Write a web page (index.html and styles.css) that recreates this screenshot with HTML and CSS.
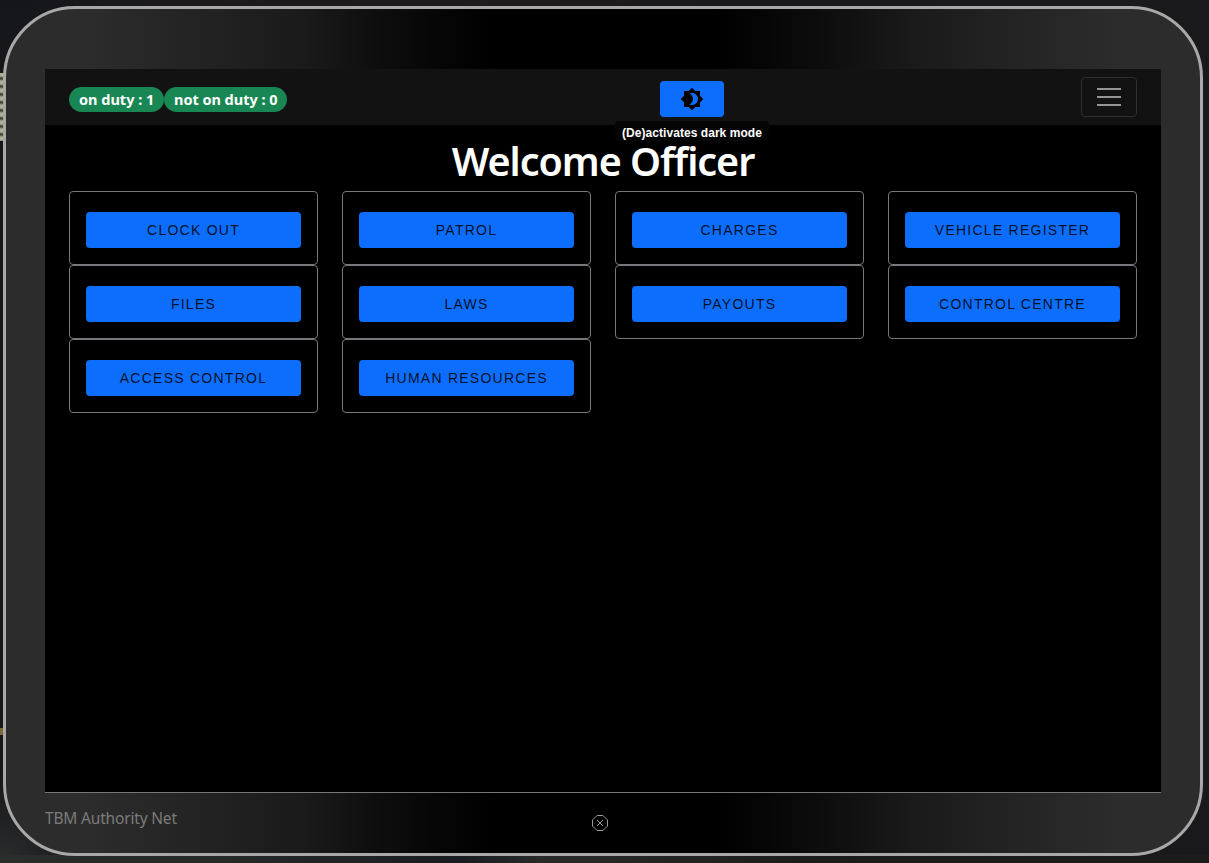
FILE: index.html
```html
<!DOCTYPE html>
<html lang="en">
<head>
<meta charset="utf-8">
<title>TBM Authority Net</title>
<link rel="stylesheet" href="styles.css">
</head>
<body>
<div class="tablet">
  <main class="screen">
    <nav class="navbar">
      <div class="badges"><span class="badge"><span class="duty">on duty : 1</span></span><span class="badge"><span class="off-duty">not on duty : 0</span></span></div>
      <div class="mode">
        <button class="btn mode-btn" aria-label="Dark mode">
          <svg width="24" height="24" viewBox="0 0 24 24"><path d="M20 8.69V4h-4.69L12 .69 8.69 4H4v4.69L.69 12 4 15.31V20h4.69L12 23.31 15.31 20H20v-4.69L23.31 12 20 8.69zM12 18c-.89 0-1.74-.2-2.500-.55C11.56 16.5 13 14.42 13 12s-1.44-4.5-3.5-5.45C10.26 6.200 11.11 6 12 6c3.31 0 6 2.69 6 6s-2.69 6-6 6z"/></svg>
        </button>
        <div class="tooltip"><span class="tooltip-text">(De)activates dark mode</span></div>
      </div>
      <button class="toggler" aria-label="Menu">
        <svg width="30" height="30" viewBox="0 0 30 30"><path d="M3 7h24M3 15h24M3 23h24" stroke="#959595" stroke-width="2"/></svg>
      </button>
    </nav>
    <h1 class="title">Welcome Officer</h1>
    <div class="grid">
      <div class="card"><button class="btn">CLOCK OUT</button></div>
      <div class="card"><button class="btn">PATROL</button></div>
      <div class="card"><button class="btn">CHARGES</button></div>
      <div class="card"><button class="btn">VEHICLE REGISTER</button></div>
      <div class="card"><button class="btn">FILES</button></div>
      <div class="card"><button class="btn">LAWS</button></div>
      <div class="card"><button class="btn">PAYOUTS</button></div>
      <div class="card"><button class="btn">CONTROL CENTRE</button></div>
      <div class="card"><button class="btn">ACCESS CONTROL</button></div>
      <div class="card"><button class="btn">HUMAN RESOURCES</button></div>
    </div>
  </main>
  <footer class="footer">
    <span class="brand">TBM Authority Net</span>
    <svg class="close" width="18" height="18" viewBox="0 0 18 18"><path d="M6 1.500h6L16.500 6v6L12 16.500H6L1.500 12V6zM6 6l6 6M12 6l-6 6" fill="none" stroke="#999"/></svg>
    <span></span>
  </footer>
</div>
</body>
</html>
```
FILE: styles.css
```css
* { box-sizing: border-box; }
body {
  margin: 0;
  height: 863px;
  overflow: hidden;
  padding: 6px 6px 7px 3px;
  font-family: "Noto Sans", "Open Sans", sans-serif;
  background:
    repeating-linear-gradient(#a9b592 0 3px, #3d4638 5px 6px, #a9b592 8px) 0 73px / 4px 68px no-repeat,
    linear-gradient(#7d6a3a, #7d6a3a) 0 728px / 3px 7px no-repeat,
    radial-gradient(circle at 0 100%, #2b2c2c 0, transparent 90px),
    linear-gradient(90deg, #14161a, #1c191b 15%, #1f1c1d 40%, #19181a 60%, #1a191c) 0 0 / 100% 8px no-repeat,
    linear-gradient(90deg, #2a2b2b, #262727 20%, #191c20 38%, #2a2a2a 45%, #1a1a1b 70%, #1c1c1c) 0 855px / 100% 8px no-repeat,
    linear-gradient(90deg, #15171a 0, #1b1c1d 50%, #19181a 100%);
}
.tablet {
  height: 850px;
  padding: 60px 39px 0 39px;
  border: 3px solid #a9a8a9;
  border-radius: 72px;
  background: linear-gradient(90deg, #2c2c2c 0 7%, #212121 18%, #1a1a1a 25%, #0e0e0e 31%, #060606 36%, #000 41% 59%, #060606 64%, #0e0e0e 69%, #1a1a1a 76%, #212121 82%, #2c2c2c 93%);
}
.screen {
  height: 724px;
  background: #000;
  border-bottom: 1px solid #777;
}
.navbar {
  height: 56px;
  display: grid;
  grid-template-columns: 1fr auto 1fr;
  align-items: start;
  padding: 0 24px;
  background: #121212;
}
.badges { display: flex; padding-top: 18px; }
.badge {
  height: 25px;
  padding: 0 10px;
  border-radius: 13px;
  background: #198754;
  color: #fff;
  font-size: 14.500px;
  font-weight: 700;
  line-height: 25px;
  white-space: nowrap;
}
.duty { display: block; width: 75px; }
.off-duty { display: block; width: 103px; letter-spacing: -.03px; }
.btn {
  display: block;
  width: 100%;
  height: 36px;
  padding: 0;
  border: 0;
  border-radius: 4px;
  background: #0d6efd;
  color: rgba(0, 0, 0, .87);
  font: 14px/36px "Liberation Sans", Arial, sans-serif;
  letter-spacing: 1.25px;
}
.mode {
  width: 154px;
  padding-top: 12px;
  transform: translateX(89px);
}
.mode-btn {
  width: 64px;
  margin: 0 auto;
  display: flex;
  align-items: center;
  justify-content: center;
}
.tooltip {
  margin-top: 4px;
  padding-top: 5px;
  height: 20px;
  border-radius: 4px;
  background: #050505;
  color: #fff;
  text-align: center;
  font: 700 12px/14px "Liberation Sans", Arial, sans-serif;
  letter-spacing: .05px;
}
.toggler {
  justify-self: end;
  width: 56px;
  height: 40px;
  margin-top: 8px;
  padding: 4px 12px;
  border: 1px solid #2e2e2e;
  border-radius: 4px;
  background: none;
}
.title {
  margin: 17px 0 11px;
  height: 38px;
  color: #fff;
  font-size: 39.500px;
  font-weight: 600;
  letter-spacing: -1.050px;
  line-height: 38px;
  text-align: center;
}
.grid {
  display: grid;
  grid-template-columns: repeat(4, 249px);
  column-gap: 24px;
  padding: 0 24px;
}
.card {
  height: 74px;
  padding: 20px 16px 16px;
  border: 1px solid #75777a;
  border-radius: 4px;
}
.footer {
  display: grid;
  grid-template-columns: 1fr auto 1fr;
  padding-top: 13px;
  color: #7b7b7b;
  font-size: 15.500px;
  letter-spacing: -.18px;
  line-height: 24px;
}
.close { margin: 8px 6px 0 0; }
```
